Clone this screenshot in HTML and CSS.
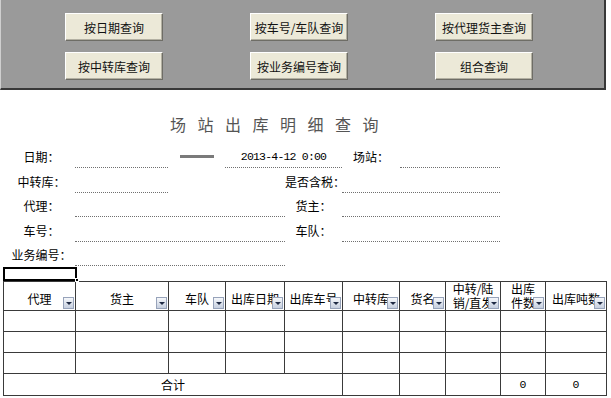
FILE: index.html
```html
<!DOCTYPE html>
<html>

<head>
    <meta charset="utf-8">
    <title>场站出库明细查询</title>
    <link rel="stylesheet" href="styles.css">
</head>

<body>
    <div class="toolbar">
        <div class="btn-grid">
            <button class="query-btn">按日期查询</button>
            <button class="query-btn">按车号/车队查询</button>
            <button class="query-btn">按代理货主查询</button>
            <button class="query-btn">按中转库查询</button>
            <button class="query-btn">按业务编号查询</button>
            <button class="query-btn">组合查询</button>
        </div>
    </div>

    <h1 class="title">场站出库明细查询</h1>

    <div class="filters">
        <!-- row 1 -->
        <span class="lbl c1">日期：</span>
        <span class="field c2"></span>
        <span class="dash c3"></span>
        <span class="field date c4-5">2013-4-12 0:00</span>
        <span class="lbl c6">场站：</span>
        <span class="field c7"></span>
        <!-- row 2 -->
        <span class="lbl c1">中转库：</span>
        <span class="field c2"></span>
        <span class="lbl c5">是否含税：</span>
        <span class="field c6-7"></span>
        <!-- row 3 -->
        <span class="lbl c1">代理：</span>
        <span class="field c2-4"></span>
        <span class="lbl c5">货主：</span>
        <span class="field c6-7"></span>
        <!-- row 4 -->
        <span class="lbl c1">车号：</span>
        <span class="field c2-4"></span>
        <span class="lbl c5">车队：</span>
        <span class="field c6-7"></span>
        <!-- row 5 -->
        <span class="lbl c1">业务编号：</span>
        <span class="field c2-4"></span>
    </div>

    <div class="active-cell"><span class="handle"></span></div>

    <table class="grid">
        <colgroup>
            <col style="width:72px">
            <col style="width:93px">
            <col style="width:57px">
            <col style="width:59px">
            <col style="width:58px">
            <col style="width:57px">
            <col style="width:46px">
            <col style="width:55px">
            <col style="width:45px">
            <col style="width:61px">
        </colgroup>
        <tr class="head">
            <td>代理<i class="filter"></i></td>
            <td>货主<i class="filter"></i></td>
            <td>车队<i class="filter"></i></td>
            <td class="over">出库日期<i class="filter"></i></td>
            <td class="over">出库车号<i class="filter"></i></td>
            <td class="over">中转库<i class="filter"></i></td>
            <td class="over">货名<i class="filter"></i></td>
            <td class="two">中转/陆<br>销/直发<i class="filter"></i></td>
            <td class="two">出库<br>件数<i class="filter"></i></td>
            <td class="over">出库吨数<i class="filter"></i></td>
        </tr>
        <tr class="data"><td></td><td></td><td></td><td></td><td></td><td></td><td></td><td></td><td></td><td></td></tr>
        <tr class="data"><td></td><td></td><td></td><td></td><td></td><td></td><td></td><td></td><td></td><td></td></tr>
        <tr class="data"><td></td><td></td><td></td><td></td><td></td><td></td><td></td><td></td><td></td><td></td></tr>
        <tr class="total">
            <td colspan="5">合计</td>
            <td></td><td></td><td></td>
            <td class="num">0</td>
            <td class="num">0</td>
        </tr>
    </table>
</body>

</html>
```

FILE: styles.css
```css
* {
    margin: 0;
    padding: 0;
    box-sizing: border-box;
}

body {
    font: 12px "Noto Sans CJK SC", sans-serif;
    color: #000;
    background: #fff;
}

.toolbar {
    width: 606px;
    height: 90px;
    background: #9a9a9a;
    border-left: 1px solid #cfcfcf;
    border-right: 2px solid #383838;
    border-bottom: 2px solid #383838;
}

.btn-grid {
    display: grid;
    grid-template-columns: 98px 98px 98px;
    column-gap: 87px;
    row-gap: 11px;
    padding: 13px 0 0 64px;
}

.query-btn {
    height: 28px;
    background: #ece9d8;
    border: 1px solid;
    border-color: #fff #6e6d66 #6e6d66 #fff;
    box-shadow: inset -1px -1px 0 #b3b0a2;
    font: 12px "Noto Sans CJK SC", sans-serif;
    color: #111;
}

.title {
    height: 54px;
    padding: 24px 0 0 170px;
    font-size: 16px;
    font-weight: normal;
    line-height: 20px;
    letter-spacing: 11.5px;
    color: #555;
}

.filters {
    display: grid;
    grid-template-columns: 75px 93px 57px 60px 57px 58px 100px;
    grid-auto-rows: 24.5px;
    width: 500px;
}

.lbl {
    padding-top: 6px;
    line-height: 14px;
    text-align: center;
    white-space: nowrap;
}

.c1 { grid-column: 1; padding-left: 8px; }
.c2 { grid-column: 2; }
.c3 { grid-column: 3; }
.c4-5 { grid-column: 4 / 6; }
.c5 { grid-column: 5; }
.c6 { grid-column: 6; }
.c7 { grid-column: 7; }
.c2-4 { grid-column: 2 / 5; }
.c6-7 { grid-column: 6 / 8; }

.field {
    border-bottom: 1px dotted #707070;
    height: 24px;
}

.date {
    padding-top: 6px;
    text-align: center;
    font: 11.5px "Liberation Mono", monospace;
    letter-spacing: -0.8px;
    line-height: 14px;
}

.dash {
    width: 34px;
    height: 3px;
    margin: 11px 0 0 12px;
    background: #7a7a7a;
}

.active-cell {
    position: relative;
    width: 74px;
    height: 14px;
    margin-left: 3px;
    border: 2px solid #000;
}

.active-cell .handle {
    position: absolute;
    right: -4px;
    bottom: -3px;
    width: 4px;
    height: 4px;
    background: #000;
    border: 1px solid #fff;
}

.grid {
    width: 604px;
    margin-left: 3px;
    table-layout: fixed;
    border-collapse: collapse;
}

.grid td {
    border: 1px solid #3a3a3a;
    padding: 0;
    text-align: center;
    vertical-align: middle;
    white-space: nowrap;
    overflow: hidden;
}

.head {
    height: 29px;
}

.head td {
    position: relative;
    padding-top: 5px;
    line-height: 13px;
}

.head td.over {
    overflow: visible;
}

.head td.two {
    padding-top: 0;
    line-height: 14px;
}

.filter {
    position: absolute;
    right: 1px;
    bottom: 1px;
    width: 11px;
    height: 12px;
    background: linear-gradient(#f6f8fb, #c6cfdf);
    border: 1px solid #97a3ba;
}

.filter::after {
    content: "";
    position: absolute;
    left: 2px;
    top: 4px;
    border-top: 3px solid #1f2a44;
    border-left: 3px solid transparent;
    border-right: 3px solid transparent;
}

.data {
    height: 21px;
}

.total {
    height: 22px;
}

.num {
    font: 11.5px "Liberation Mono", monospace;
}
```
